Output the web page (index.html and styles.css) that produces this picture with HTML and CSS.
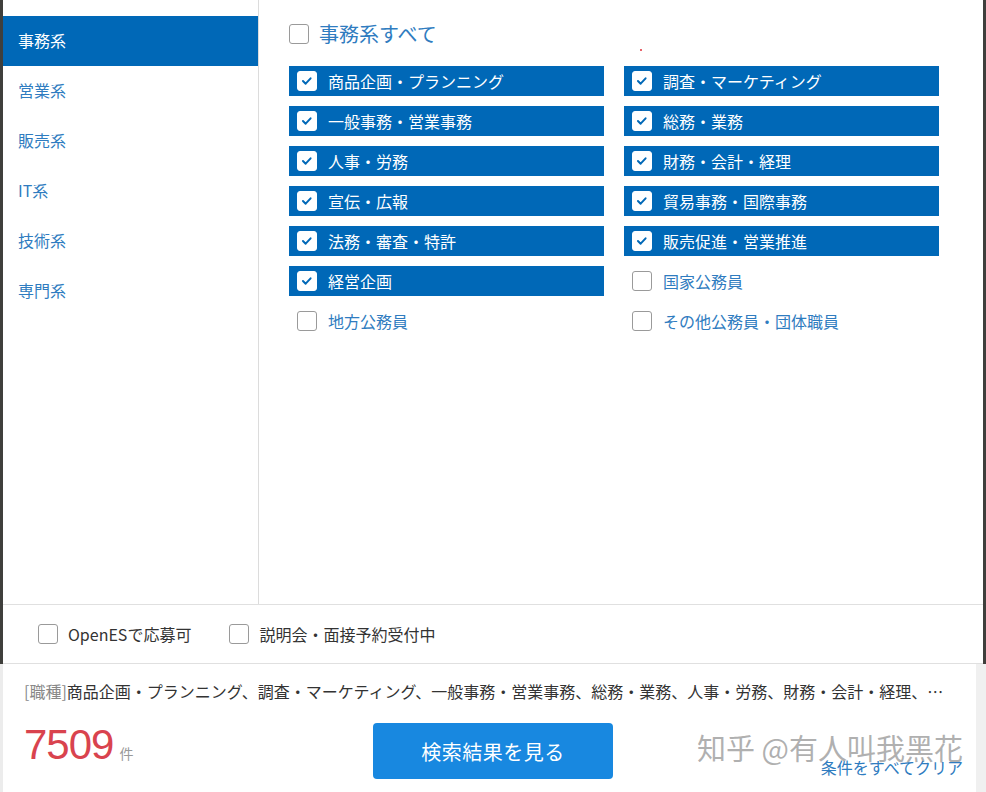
FILE: index.html
```html
<!DOCTYPE html>
<html lang="ja">
<head>
<meta charset="utf-8">
<title>職種選択</title>
<link rel="stylesheet" href="styles.css">
</head>
<body>
<div class="page">
  <div class="modal">
    <div class="main">
      <nav class="sidebar">
        <div class="side-item active">事務系</div>
        <div class="side-item">営業系</div>
        <div class="side-item">販売系</div>
        <div class="side-item">IT系</div>
        <div class="side-item">技術系</div>
        <div class="side-item">専門系</div>
      </nav>
      <section class="content">
        <span class="dot"></span>
        <label class="all-row"><span class="box"></span><span class="all-text">事務系すべて</span></label>
        <div class="grid">
          <div class="opt on"><span class="box"><svg viewBox="0 0 20 20"><polyline points="5.5,10 8.5,13 14,7"/></svg></span><span>商品企画・プランニング</span></div>
          <div class="opt on"><span class="box"><svg viewBox="0 0 20 20"><polyline points="5.5,10 8.5,13 14,7"/></svg></span><span>調査・マーケティング</span></div>
          <div class="opt on"><span class="box"><svg viewBox="0 0 20 20"><polyline points="5.5,10 8.5,13 14,7"/></svg></span><span>一般事務・営業事務</span></div>
          <div class="opt on"><span class="box"><svg viewBox="0 0 20 20"><polyline points="5.5,10 8.5,13 14,7"/></svg></span><span>総務・業務</span></div>
          <div class="opt on"><span class="box"><svg viewBox="0 0 20 20"><polyline points="5.5,10 8.5,13 14,7"/></svg></span><span>人事・労務</span></div>
          <div class="opt on"><span class="box"><svg viewBox="0 0 20 20"><polyline points="5.5,10 8.5,13 14,7"/></svg></span><span>財務・会計・経理</span></div>
          <div class="opt on"><span class="box"><svg viewBox="0 0 20 20"><polyline points="5.5,10 8.5,13 14,7"/></svg></span><span>宣伝・広報</span></div>
          <div class="opt on"><span class="box"><svg viewBox="0 0 20 20"><polyline points="5.5,10 8.5,13 14,7"/></svg></span><span>貿易事務・国際事務</span></div>
          <div class="opt on"><span class="box"><svg viewBox="0 0 20 20"><polyline points="5.5,10 8.5,13 14,7"/></svg></span><span>法務・審査・特許</span></div>
          <div class="opt on"><span class="box"><svg viewBox="0 0 20 20"><polyline points="5.5,10 8.5,13 14,7"/></svg></span><span>販売促進・営業推進</span></div>
          <div class="opt on"><span class="box"><svg viewBox="0 0 20 20"><polyline points="5.5,10 8.5,13 14,7"/></svg></span><span>経営企画</span></div>
          <div class="opt"><span class="box"></span><span>国家公務員</span></div>
          <div class="opt"><span class="box"></span><span>地方公務員</span></div>
          <div class="opt"><span class="box"></span><span>その他公務員・団体職員</span></div>
        </div>
      </section>
    </div>
    <div class="options">
      <label class="check"><span class="box"></span><span>OpenESで応募可</span></label>
      <label class="check"><span class="box"></span><span>説明会・面接予約受付中</span></label>
    </div>
  </div>
  <footer class="footer">
    <p class="summary"><span class="tag">[職種]</span>商品企画・プランニング、調査・マーケティング、一般事務・営業事務、総務・業務、人事・労務、財務・会計・経理、貿易事務・国際事務、宣伝・広報</p>
    <div class="actions">
      <div class="count"><span class="num">7509</span><span class="unit">件</span></div>
      <button class="search">検索結果を見る</button>
      <div class="right">
        <span class="watermark">知乎 @有人叫我黑花</span>
        <a class="clear" href="#">条件をすべてクリア</a>
      </div>
    </div>
  </footer>
</div>
</body>
</html>
```

FILE: styles.css
```css
* { box-sizing: border-box; }
html, body { margin: 0; padding: 0; }
body {
  width: 986px;
  height: 792px;
  overflow: hidden;
  background: #fff;
  font-family: "Noto Sans CJK JP", "Noto Sans", sans-serif;
}
.page {
  display: flex;
  flex-direction: column;
  height: 792px;
}
.modal {
  height: 664px;
  border-left: 3px solid #3f3f3c;
  border-right: 3px solid #3f3f3c;
  background: #fff;
  display: flex;
  flex-direction: column;
}
.main {
  display: flex;
  height: 604px;
}
.sidebar {
  width: 256px;
  border-right: 1px solid #dcdcdc;
  padding-top: 16px;
}
.side-item {
  height: 50px;
  line-height: 48px;
  padding-left: 15px;
  font-size: 16px;
  color: #2f7cc0;
}
.side-item.active {
  background: #0068b7;
  color: #fff;
}
.content {
  position: relative;
  flex: 1;
  padding: 19px 0 0 30px;
}
.dot {
  position: absolute;
  left: 381px;
  top: 49px;
  width: 2px;
  height: 2px;
  background: #e0303a;
  border-radius: 1px;
}
.box {
  width: 20px;
  height: 20px;
  border: 1px solid #9a9a9a;
  border-radius: 3px;
  background: #fff;
  flex: none;
  display: flex;
  align-items: center;
  justify-content: center;
}
.box svg {
  width: 20px;
  height: 20px;
  fill: none;
  stroke: #0068b7;
  stroke-width: 2.2;
  stroke-linecap: round;
  stroke-linejoin: round;
}
.all-row {
  display: flex;
  align-items: center;
  gap: 10px;
  height: 30px;
}
.all-text {
  font-size: 20px;
  line-height: 28px;
  color: #2f7cc0;
}
.grid {
  margin-top: 17px;
  display: grid;
  grid-template-columns: 315px 315px;
  grid-auto-rows: 30px;
  column-gap: 20px;
  row-gap: 10px;
}
.opt {
  display: flex;
  align-items: center;
  gap: 11px;
  padding-left: 8px;
  font-size: 16px;
  color: #2f7cc0;
}
.opt.on {
  background: #0068b7;
  color: #fff;
}
.opt.on .box {
  border-color: #fff;
}
.options {
  height: 60px;
  border-top: 1px solid #e0e0e0;
  border-bottom: 1px solid #e0e0e0;
  display: flex;
  align-items: center;
  padding-left: 35px;
  gap: 38px;
}
.check {
  display: flex;
  align-items: center;
  gap: 10px;
  font-size: 16px;
  color: #333;
}
.footer {
  flex: 1;
  border-left: 3px solid #ececec;
  border-right: 10px solid #f0f0f0;
  background: #fff;
  padding: 16px 13px 0 21px;
}
.summary {
  margin: 0 5px 0 0;
  font-size: 16px;
  line-height: 22px;
  color: #333;
  white-space: nowrap;
  overflow: hidden;
  text-overflow: ellipsis;
}
.tag { color: #888; }
.actions {
  display: flex;
  align-items: flex-end;
  margin-top: 21px;
}
.count {
  width: 349px;
  display: flex;
  align-items: baseline;
  padding-bottom: 12px;
}
.num {
  font-family: "Liberation Sans", Arial, sans-serif;
  font-size: 42px;
  line-height: 44px;
  color: #d9434e;
  letter-spacing: -1px;
}
.unit {
  margin-left: 6px;
  font-size: 14px;
  color: #999;
}
.search {
  width: 240px;
  height: 56px;
  border: none;
  border-radius: 4px;
  background: #1888e0;
  color: #fff;
  font-family: "Noto Sans CJK JP", sans-serif;
  font-size: 20px;
  letter-spacing: 0.5px;
}
.right {
  position: relative;
  flex: 1;
  display: flex;
  justify-content: flex-end;
  height: 56px;
  align-items: flex-end;
}
.watermark {
  position: absolute;
  right: 0;
  top: 6px;
  font-size: 29px;
  line-height: 36px;
  color: rgba(150, 150, 150, 0.75);
  white-space: nowrap;
}
.clear {
  position: relative;
  font-size: 16px;
  line-height: 20px;
  color: #2f7cc0;
  text-decoration: none;
  margin-bottom: 2px;
}
```
